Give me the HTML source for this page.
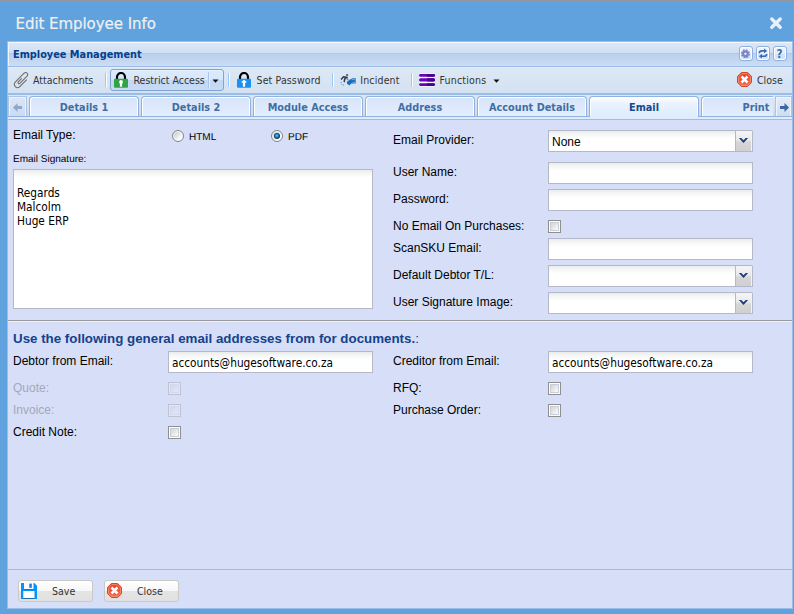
<!DOCTYPE html>
<html><head><meta charset="utf-8"><title>Edit Employee Info</title>
<style>
*{box-sizing:border-box;margin:0;padding:0}
html,body{width:794px;height:614px;overflow:hidden;background:#5fa2dd;font-family:"Liberation Sans",sans-serif}
#win{position:absolute;left:0;top:0;width:794px;height:614px;background:#5fa2dd;overflow:hidden}
#topline{left:0;top:0;width:794px;height:1px;background:#95969f}
#win div,#win span,#win svg{position:absolute}
#wtitle{left:15.500px;top:13px;font:16.700px/20px "DejaVu Sans Condensed","Liberation Sans",sans-serif;color:#f0f0f0;letter-spacing:-0.06px;white-space:nowrap;-webkit-text-stroke:0.2px #f0f0f0}
#panel{left:7px;top:41px;width:786px;height:568px;background:#d6dff7;border:1px solid #99bce8}
/* coordinates inside #panel are page coords minus (8,43) -> use wrapper */
#pg{left:-8px;top:-42px;width:794px;height:614px}
#phead{left:8px;top:42px;width:784px;height:24px;background:linear-gradient(#f4f8fd 0,#f4f8fd 1px,#dbe7f6 1px,#cfdff4 11px,#afc9ec 11px,#afc9ec 12px,#b9d0ee 12px,#cddcf3 24px)}
#ptitle{left:13px;top:47px;font:bold 10.850px/15px "DejaVu Sans Condensed","Liberation Sans",sans-serif;color:#04408c;white-space:nowrap}
.tool{top:46px;width:14px;height:15px;border:1px solid #8fb0e0;border-radius:3px;background:linear-gradient(#edf4fd,#e3eefb 50%,#cfe1f8 50%,#d6e6fa);box-shadow:inset 0 0 0 1px #fff}
#tbar{left:8px;top:66px;width:784px;height:28px;border-top:1px solid #99bce8;border-bottom:1px solid #99bce8;background:linear-gradient(#e5edf8 0,#e5edf8 1px,#dde8f5 1px,#d3e1f1)}
.tbtxt{font:10.500px/16px "DejaVu Sans Condensed","Liberation Sans",sans-serif;color:#333;white-space:nowrap;top:72px}
.sep{top:73px;width:2px;height:14px;border-left:1px solid #98c8ff;border-right:1px solid #fff}
#tabbar{left:8px;top:94px;width:784px;height:23px;background:linear-gradient(#dde8f5,#cbdbef);border-top:1px solid #99bce8;border-bottom:1px solid #8db2e3}
#tabband{left:8px;top:117px;width:784px;height:3px;background:#deecfd;border-bottom:1px solid #99bce8}
.tab{top:96px;width:110px;height:20px;border:1px solid #8db2e3;border-bottom:0;border-radius:4px 4px 0 0;background:linear-gradient(#d7e5fa,#e3eefc);box-shadow:inset 1px 1px 0 0 #fff, inset -1px 0 0 0 #fff;font:bold 10.800px/13px "DejaVu Sans Condensed","Liberation Sans",sans-serif;color:#416da3;text-align:center;padding-top:4px;white-space:nowrap}
.tab.act{height:21px;background:linear-gradient(#ffffff 0,#eaf2fe 35%,#deecfd 100%);color:#15498b}
.lbl{font:12px/14px "Liberation Sans",sans-serif;color:#000;white-space:nowrap}
.dis{color:#a3a8ba}
.inp{height:22px;width:205px;background:#fff linear-gradient(#e9ecea 0,#f4f6f5 3px,#fff 8px);border:1px solid #b5b8c8;font:12px/20px "Liberation Sans",sans-serif;color:#000;padding:1px 0 0 3px;white-space:nowrap;overflow:hidden}
.tv{font-family:"DejaVu Sans Condensed","Liberation Sans",sans-serif;font-size:11.750px}
.cb{width:13px;height:13px;border:1px solid #8e8f8f;background:linear-gradient(135deg,#cdd1d9 15%,#fbfbfb 80%);box-shadow:inset 0 0 0 1px #fdfdfd,inset 0 0 0 2px #c9cdd5}
.cb.d{border-color:#bfc3d1;background:linear-gradient(135deg,#d2d8eb 15%,#e2e7f7 80%);box-shadow:inset 0 0 0 1px #e2e7f8,inset 0 0 0 2px #d3d9ec}
.trig{width:17px;height:22px;border:1px solid #b5b8c8;border-left:0;border-radius:0 2px 0 0;background:linear-gradient(#f6f6f6,#e9e9e9 45%,#d6d6d6 55%,#d0d0d0);box-shadow:inset -1px 1px 0 0 #f3f3f3}
.radio{width:12px;height:12px;border:1px solid #848585;border-radius:50%;background:linear-gradient(135deg,#c9cfd4 20%,#ffffff 75%);box-shadow:inset 0 0 0 1px #fbfbfb}
.btn{top:580px;width:75px;height:22px;border:1px solid #c9c9c9;border-radius:3px;background:linear-gradient(#ffffff,#f7f7f7 10px,#e4e4e4 10px,#e1e1e1)}
</style></head><body>
<div id="win">
<div id="topline"></div>
<div id="wtitle">Edit Employee Info</div>
<svg style="left:768px;top:15px" width="16" height="16" viewBox="0 0 16 16"><path d="M3.8 4 L12.2 12.2 M12.2 4 L3.8 12.2" stroke="#e8f1fa" stroke-width="3.400" stroke-linecap="round"/></svg>
<div id="panel"><div id="pg">
<!-- header -->
<div id="phead"></div>
<div style="left:8px;top:42px;width:1px;height:24px;background:#eef4fc"></div>
<div id="ptitle">Employee Management</div>
<div class="tool" style="left:739px"></div>
<div class="tool" style="left:756px"></div>
<div class="tool" style="left:773px"></div>
<svg style="left:739px;top:46px" width="14" height="15" viewBox="0 0 14 15"><circle cx="6.400" cy="7.800" r="3.800" fill="none" stroke="#8085ca" stroke-width="1.500" stroke-dasharray="1.700 1.284"/><circle cx="6.400" cy="7.800" r="2.300" fill="none" stroke="#8085ca" stroke-width="2.600"/><circle cx="6.400" cy="7.800" r="1.050" fill="#e6ebf8"/></svg>
<svg style="left:756px;top:46px" width="14" height="15" viewBox="0 0 14 15"><path d="M3.300 7.200Q3.300 4.900 6 4.900H8.300" fill="none" stroke="#3a6ab0" stroke-width="1.600"/><path d="M8 2.600L11.200 4.900L8 7.200z" fill="#3a6ab0"/><path d="M10.700 7.900Q10.700 10.200 8 10.200H5.700" fill="none" stroke="#3a6ab0" stroke-width="1.600"/><path d="M6 7.900L2.800 10.200L6 12.500z" fill="#3a6ab0"/></svg>
<span style="left:772.500px;top:46.500px;width:14px;height:14px;text-align:center;font:bold 11.500px/15px 'DejaVu Sans Condensed','Liberation Sans',sans-serif;color:#3f69ac">?</span>
<!-- toolbar -->
<div id="tbar"></div>
<!-- tab bar -->
<div id="tabbar"></div>
<div id="tabband"></div>

<!-- toolbar items -->
<svg style="left:13px;top:72px;overflow:visible" width="16" height="16" viewBox="0 0 16 16"><g transform="matrix(0.7071 0.7071 0.7071 -0.7071 12.600 2.700)"><path d="M4.300 -2.700V-12.500A3.200 3.200 0 0 0 -2.100 -12.500V0A2.100 2.100 0 0 0 2.100 0V-10.200A1.100 1.100 0 0 0 -0.100 -10.200V-5.400" fill="none" stroke="#736c68" stroke-width="1.100"/></g></svg>
<span class="tbtxt" style="left:33px">Attachments</span>
<div class="sep" style="left:105px"></div>
<div id="rbtn" style="left:110px;top:69px;width:114px;height:22px;border:1px solid #81a4d0;border-radius:3px;background:linear-gradient(#dcebfd,#d6e7fc 10px,#c3d7f3 10px,#c6dbf6);box-shadow:inset 0 1px 0 0 #e6f1fe"></div>
<div style="left:208px;top:72px;width:2px;height:16px;border-left:1px solid #a9c3eb;border-right:1px solid #e2eefd"></div>
<svg style="left:113px;top:72px" width="16" height="16" viewBox="0 0 16 16"><path d="M4 7.500V5a4 4 0 0 1 8 0v2.500" stroke="#000" stroke-width="2.200" fill="none"/><rect x="1" y="6.800" width="14" height="9" rx="1" fill="#34a345"/><circle cx="8" cy="10" r="1.900" fill="#fff"/><rect x="6.900" y="10" width="2.200" height="4.700" fill="#fff"/></svg>
<span class="tbtxt" style="left:133.500px">Restrict Access</span>
<svg style="left:212.400px;top:78.600px" width="7" height="5" viewBox="0 0 7 5"><path d="M0.5 0.5h6L3.5 3.7z" fill="#111"/></svg>
<div class="sep" style="left:228px"></div>
<svg style="left:236px;top:72px" width="16" height="16" viewBox="0 0 16 16"><path d="M4 7.500V5a4 4 0 0 1 8 0v2.500" stroke="#000" stroke-width="2.200" fill="none"/><rect x="1" y="6.800" width="14" height="9" rx="1" fill="#1a91f0"/><path d="M8 7.700l2.900 2.400-1.800 0.900v3.700H6.900v-3.700l-1.800-0.900z" fill="#fff"/></svg>
<span class="tbtxt" style="left:256.500px;letter-spacing:0.13px">Set Password</span>
<div class="sep" style="left:332px"></div>
<svg style="left:340px;top:72px" width="16" height="16" viewBox="0 0 16 16"><circle cx="7.100" cy="3" r="1.100" fill="#46556e"/><path d="M1.100 7.400L3.500 4.700L7.800 5.400M6 4.900L4.600 7.600L4.200 10.200" stroke="#2c3a52" stroke-width="1.500" fill="none"/><path d="M6.300 6.200L8.300 8" stroke="#6f7b90" stroke-width="1.100" fill="none"/><path d="M6.9 9.7 L10.4 7.3 L12.7 6.2 H15.7 V11.6 H11.2 L9.4 13.6 L6.9 11.6z" fill="#1a6fba"/><path d="M11.6 7.6h3.4M12.6 10.4h2.6" stroke="#8fbbe6" stroke-width="0.8"/><path d="M0.5 10.4h1.2M1.4 12.4h0.9M3 13h0.9" stroke="#3f8ad0" stroke-width="0.9"/></svg>
<span class="tbtxt" style="left:360.300px;letter-spacing:0.15px">Incident</span>
<div class="sep" style="left:411px"></div>
<svg style="left:419px;top:72px" width="16" height="16" viewBox="0 0 16 16"><rect x="0" y="1.5" width="16" height="13" fill="#f4fbfd"/><g><rect x="0" y="2" width="16" height="2.8" rx="1.4" fill="#6a00b8"/><rect x="0" y="6.3" width="16" height="3.3" rx="1.6" fill="#6a00b8"/><rect x="0" y="11.2" width="16" height="2.8" rx="1.4" fill="#6a00b8"/><path d="M8 2h6.6a1.4 1.4 0 0 1 0 2.8H8zM8 6.3h6.4a1.6 1.6 0 0 1 0 3.3H8zM8 11.2h6.6a1.4 1.4 0 0 1 0 2.8H8z" fill="#4b0091"/></g></svg>
<span class="tbtxt" style="left:439.500px;letter-spacing:0.2px">Functions</span>
<svg style="left:493px;top:78.600px" width="7" height="5" viewBox="0 0 7 5"><path d="M0.5 0.5h6L3.5 3.7z" fill="#111"/></svg>
<svg style="left:737px;top:72px" width="15" height="15" viewBox="0 0 15 15"><defs><linearGradient id="rg" x1="0" y1="0" x2="0" y2="1"><stop offset="0" stop-color="#e63a18"/><stop offset="1" stop-color="#f4694c"/></linearGradient></defs><path d="M4.4 0.5h6.2l3.9 3.9v6.2l-3.9 3.9H4.4L0.500 10.600V4.400z" fill="url(#rg)" stroke="#d8452c" stroke-width="1"/><path d="M4.700 1.700h5.600l3 3v5.600l-3 3H4.700l-3-3V4.700z" fill="none" stroke="#f6a290" stroke-width="0.8"/><path d="M4.500 4.500l6 6M10.500 4.500l-6 6" stroke="#fff" stroke-width="2.500"/></svg>
<span class="tbtxt" style="left:757px">Close</span>
<!-- tabs -->
<div id="tabclip" style="left:26px;top:94px;width:747px;height:24px;overflow:hidden">
<div class="tab" style="left:3px;top:2px">Details 1</div>
<div class="tab" style="left:115px;top:2px">Details 2</div>
<div class="tab" style="left:227px;top:2px">Module Access</div>
<div class="tab" style="left:339px;top:2px">Address</div>
<div class="tab" style="left:451px;top:2px">Account Details</div>
<div class="tab act" style="left:563px;top:2px">Email</div>
<div class="tab" style="left:675px;top:2px">Print</div>
</div>
<div style="left:590px;top:116px;width:108px;height:1px;background:#deecfd"></div>
<div style="left:8px;top:96px;width:19px;height:20px;border:1px solid #a9c5eb;border-bottom:0;background:linear-gradient(#dce7f5,#cbdaf0);box-shadow:inset 1px 1px 0 0 #e9f1fb,inset -1px 0 0 0 #e9f1fb"></div>
<svg style="left:12px;top:102px" width="11" height="11" viewBox="0 0 11 11"><path d="M1 5.500L5.500 1v3h4.500v3H5.500v3z" fill="#8fa7cb"/></svg>
<div style="left:775px;top:96px;width:17px;height:20px;border:1px solid #a9c5eb;border-bottom:0;background:linear-gradient(#e3edf9,#cedcf1);box-shadow:inset 1px 1px 0 0 #eef4fc,inset -1px 0 0 0 #eef4fc"></div>
<svg style="left:779px;top:102px" width="11" height="11" viewBox="0 0 11 11"><path d="M10 5.500L5.500 1v3H1v3h4.500v3z" fill="#3f65a0"/></svg>
<!-- form left -->
<span class="lbl" style="left:13px;top:128px">Email Type:</span>
<div class="radio" style="left:172px;top:130px"></div>
<span class="lbl" style="left:189px;top:132px;font-size:10px;line-height:12px;text-rendering:geometricPrecision">HTML</span>
<div class="radio" style="left:271px;top:130px"></div>
<div style="left:273.600px;top:132.600px;width:6.800px;height:6.800px;border-radius:50%;background:radial-gradient(circle closest-side at 47% 45%,#7fd0f2 0,#2a9de0 35%,#1d7fc6 62%,#0c3a66 95%)"></div>
<span class="lbl" style="left:288px;top:132px;font-size:10px;line-height:12px;text-rendering:geometricPrecision">PDF</span>
<span class="lbl" style="left:13px;top:153.700px;font-size:10px;line-height:12px;text-rendering:geometricPrecision">Email Signature:</span>
<div class="inp" style="left:13px;top:169px;width:360px;height:140px;line-height:14px;padding:2px 0 0 3px;font-family:'DejaVu Sans Condensed','Liberation Sans',sans-serif;font-size:11.750px"><br>Regards<br>Malcolm<br>Huge ERP</div>
<!-- form right -->
<span class="lbl" style="left:393px;top:133px">Email Provider:</span>
<div class="inp" style="left:548px;top:130px;width:188px">None</div><div class="trig" style="left:736px;top:130px"></div>
<span class="lbl" style="left:393px;top:165px">User Name:</span>
<div class="inp" style="left:548px;top:162px"></div>
<span class="lbl" style="left:393px;top:192px">Password:</span>
<div class="inp" style="left:548px;top:189px"></div>
<span class="lbl" style="left:393px;top:219px">No Email On Purchases:</span>
<div class="cb" style="left:548px;top:220px"></div>
<span class="lbl" style="left:393px;top:241px">ScanSKU Email:</span>
<div class="inp" style="left:548px;top:238px"></div>
<span class="lbl" style="left:393px;top:268px">Default Debtor T/L:</span>
<div class="inp" style="left:548px;top:265px;width:188px"></div><div class="trig" style="left:736px;top:265px"></div>
<span class="lbl" style="left:393px;top:295px">User Signature Image:</span>
<div class="inp" style="left:548px;top:292px;width:188px"></div><div class="trig" style="left:736px;top:292px"></div>
<svg style="left:738px;top:137px" width="11" height="7" viewBox="0 0 11 7"><path d="M0.900 1H3.300L5.500 3.300L7.700 1H10.100L5.500 6.100z" fill="#1c3a80"/></svg>
<svg style="left:738px;top:272px" width="11" height="7" viewBox="0 0 11 7"><path d="M0.900 1H3.300L5.500 3.300L7.700 1H10.100L5.500 6.100z" fill="#1c3a80"/></svg>
<svg style="left:738px;top:299px" width="11" height="7" viewBox="0 0 11 7"><path d="M0.900 1H3.300L5.500 3.300L7.700 1H10.100L5.500 6.100z" fill="#1c3a80"/></svg>
<!-- hr -->
<div style="left:8px;top:320px;width:784px;height:2px;border-top:1px solid #9a9a9a;border-bottom:1px solid #eef1fb"></div>
<span style="left:13px;top:331px;font:bold 13.333px/16px 'Liberation Sans',sans-serif;color:#15428b;white-space:nowrap">Use the following general email addresses from for documents.<span style="position:static;font-weight:normal">:</span></span>
<span class="lbl" style="left:13px;top:354px">Debtor from Email:</span>
<div class="inp tv" style="left:168px;top:351px">accounts@hugesoftware.co.za</div>
<span class="lbl" style="left:393px;top:354px">Creditor from Email:</span>
<div class="inp tv" style="left:548px;top:351px">accounts@hugesoftware.co.za</div>
<span class="lbl dis" style="left:13px;top:381px">Quote:</span>
<div class="cb d" style="left:168px;top:382px"></div>
<span class="lbl" style="left:393px;top:381px">RFQ:</span>
<div class="cb" style="left:548px;top:382px"></div>
<span class="lbl dis" style="left:13px;top:403px">Invoice:</span>
<div class="cb d" style="left:168px;top:404px"></div>
<span class="lbl" style="left:393px;top:403px">Purchase Order:</span>
<div class="cb" style="left:548px;top:404px"></div>
<span class="lbl" style="left:13px;top:425px">Credit Note:</span>
<div class="cb" style="left:168px;top:426px"></div>
<!-- bottom bar -->
<div style="left:8px;top:569px;width:784px;height:1px;background:#99bce8"></div>
<div class="btn" style="left:18px"></div>
<svg style="left:21px;top:583px" width="16" height="16" viewBox="0 0 16 16"><path d="M0 0h3v6h9.500V0h0.800L16 2.700V16H0z" fill="#0094ff"/><rect x="2.300" y="8" width="11.200" height="7.200" fill="#fff"/><rect x="2.300" y="15.200" width="11.200" height="0.800" fill="#1c5a8f"/><rect x="3" y="6" width="9.500" height="0.600" fill="#1c6fb5"/><rect x="8.300" y="0.600" width="2.500" height="4.200" fill="#0a7fe0"/></svg>
<span class="tbtxt" style="left:52px;top:583px">Save</span>
<div class="btn" style="left:104px"></div>
<svg style="left:107px;top:583px" width="15" height="15" viewBox="0 0 15 15"><path d="M4.400 0.500h6.200l3.900 3.900v6.200l-3.900 3.900H4.400L0.500 10.600V4.400z" fill="url(#rg)" stroke="#d8452c" stroke-width="1"/><path d="M4.700 1.700h5.600l3 3v5.600l-3 3H4.700l-3-3V4.700z" fill="none" stroke="#f6a290" stroke-width="0.800"/><path d="M4.500 4.500l6 6M10.500 4.500l-6 6" stroke="#fff" stroke-width="2.500"/></svg>
<span class="tbtxt" style="left:137px;top:583px">Close</span>
</div></div>
</div>
</body></html>
